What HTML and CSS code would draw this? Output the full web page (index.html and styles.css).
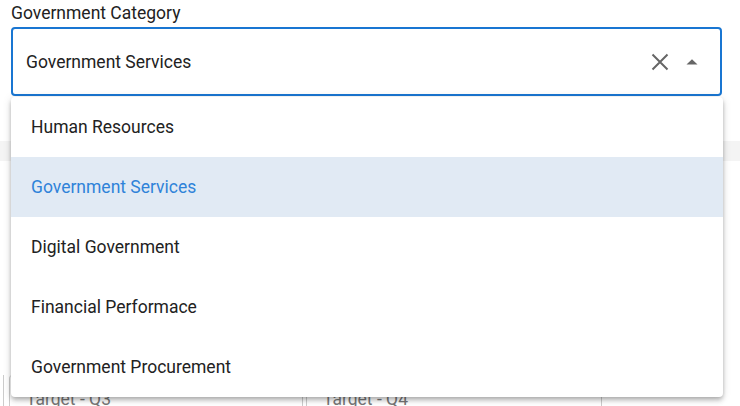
FILE: index.html
```html
<!DOCTYPE html>
<html>
<head>
<meta charset="utf-8">
<link rel="stylesheet" href="styles.css">
</head>
<body>
<div class="page">
  <div class="field">
    <label class="label">Government Category</label>
    <div class="select">
      <span class="value">Government Services</span>
      <span class="icons">
        <svg class="clear" width="20" height="20" viewBox="0 0 20 20"><path d="M2.5 2.5 L17.5 17.5 M17.5 2.5 L2.5 17.5" stroke="#666" stroke-width="2" fill="none"/></svg>
        <svg class="caret" width="12" height="6" viewBox="0 0 12 6"><path d="M0.5 5.5 L6 0.2 L11.5 5.5 Z" fill="#666"/></svg>
      </span>
    </div>
  </div>
  <div class="band"></div>
  <div class="spacer"></div>
  <div class="cards">
    <div class="edge"></div>
    <div class="card first"><span>Target - Q3</span></div>
    <div class="card"><span>Target - Q4</span></div>
    <div class="card last"></div>
  </div>

  <ul class="menu">
    <li>Human Resources</li>
    <li class="active">Government Services</li>
    <li>Digital Government</li>
    <li>Financial Performace</li>
    <li>Government Procurement</li>
  </ul>
</div>
</body>
</html>
```

FILE: styles.css
```css
html, body {
  margin: 0;
  padding: 0;
  background: #fff;
  font-family: Roboto, "Liberation Sans", Arial, sans-serif;
  overflow: hidden;
}
.page {
  position: relative;
  width: 740px;
  height: 406px;
}
.field {
  padding: 3px 18px 0 11px;
}
.label {
  display: block;
  font-size: 17.5px;
  line-height: 20px;
  color: #222;
  margin-bottom: 4px;
}
.select {
  height: 65px;
  border: 2px solid #1976d2;
  border-radius: 4px;
  display: flex;
  align-items: center;
  padding: 0 22px 0 13px;
}
.value {
  flex: 1;
  font-size: 17.5px;
  color: #222;
  padding-top: 1px;
}
.icons {
  display: flex;
  align-items: center;
  gap: 16px;
}
.clear {
  margin-top: 1px;
}
.band {
  margin-top: 45px;
  height: 20px;
  background: #f4f4f4;
}
.spacer {
  height: 214px;
}
.cards {
  display: flex;
  height: 40px;
}
.edge {
  width: 3px;
  border-right: 1px solid #ccc;
  flex: none;
}
.card {
  width: 292px;
  border-left: 1px solid #ccc;
  border-right: 1px solid #ccc;
  border-top-left-radius: 4px;
  margin-left: 5px;
  padding: 14px 0 0 16px;
  font-size: 17.5px;
  color: #777;
  flex: none;
}
.card.first {
  width: 276px;
  margin-left: 5px;
}
.card.last {
  border-right: none;
  margin-left: 0;
  border-left: none;
  width: 100px;
}
.card + .card {
  margin-left: 3px;
  width: 278px;
}
.menu {
  position: absolute;
  top: 97px;
  left: 11px;
  width: 712px;
  margin: 0;
  padding: 0;
  list-style: none;
  background: #fff;
  border-radius: 4px;
  box-shadow: 0 2px 4px -1px rgba(0,0,0,0.2), 0 4px 5px 0 rgba(0,0,0,0.14), 0 1px 10px 0 rgba(0,0,0,0.12);
}
.menu li {
  height: 60px;
  display: flex;
  align-items: center;
  padding-left: 20px;
  font-size: 17.5px;
  color: #222;
}
.menu li.active {
  background: #e1eaf4;
  color: #2f83d9;
}
```
